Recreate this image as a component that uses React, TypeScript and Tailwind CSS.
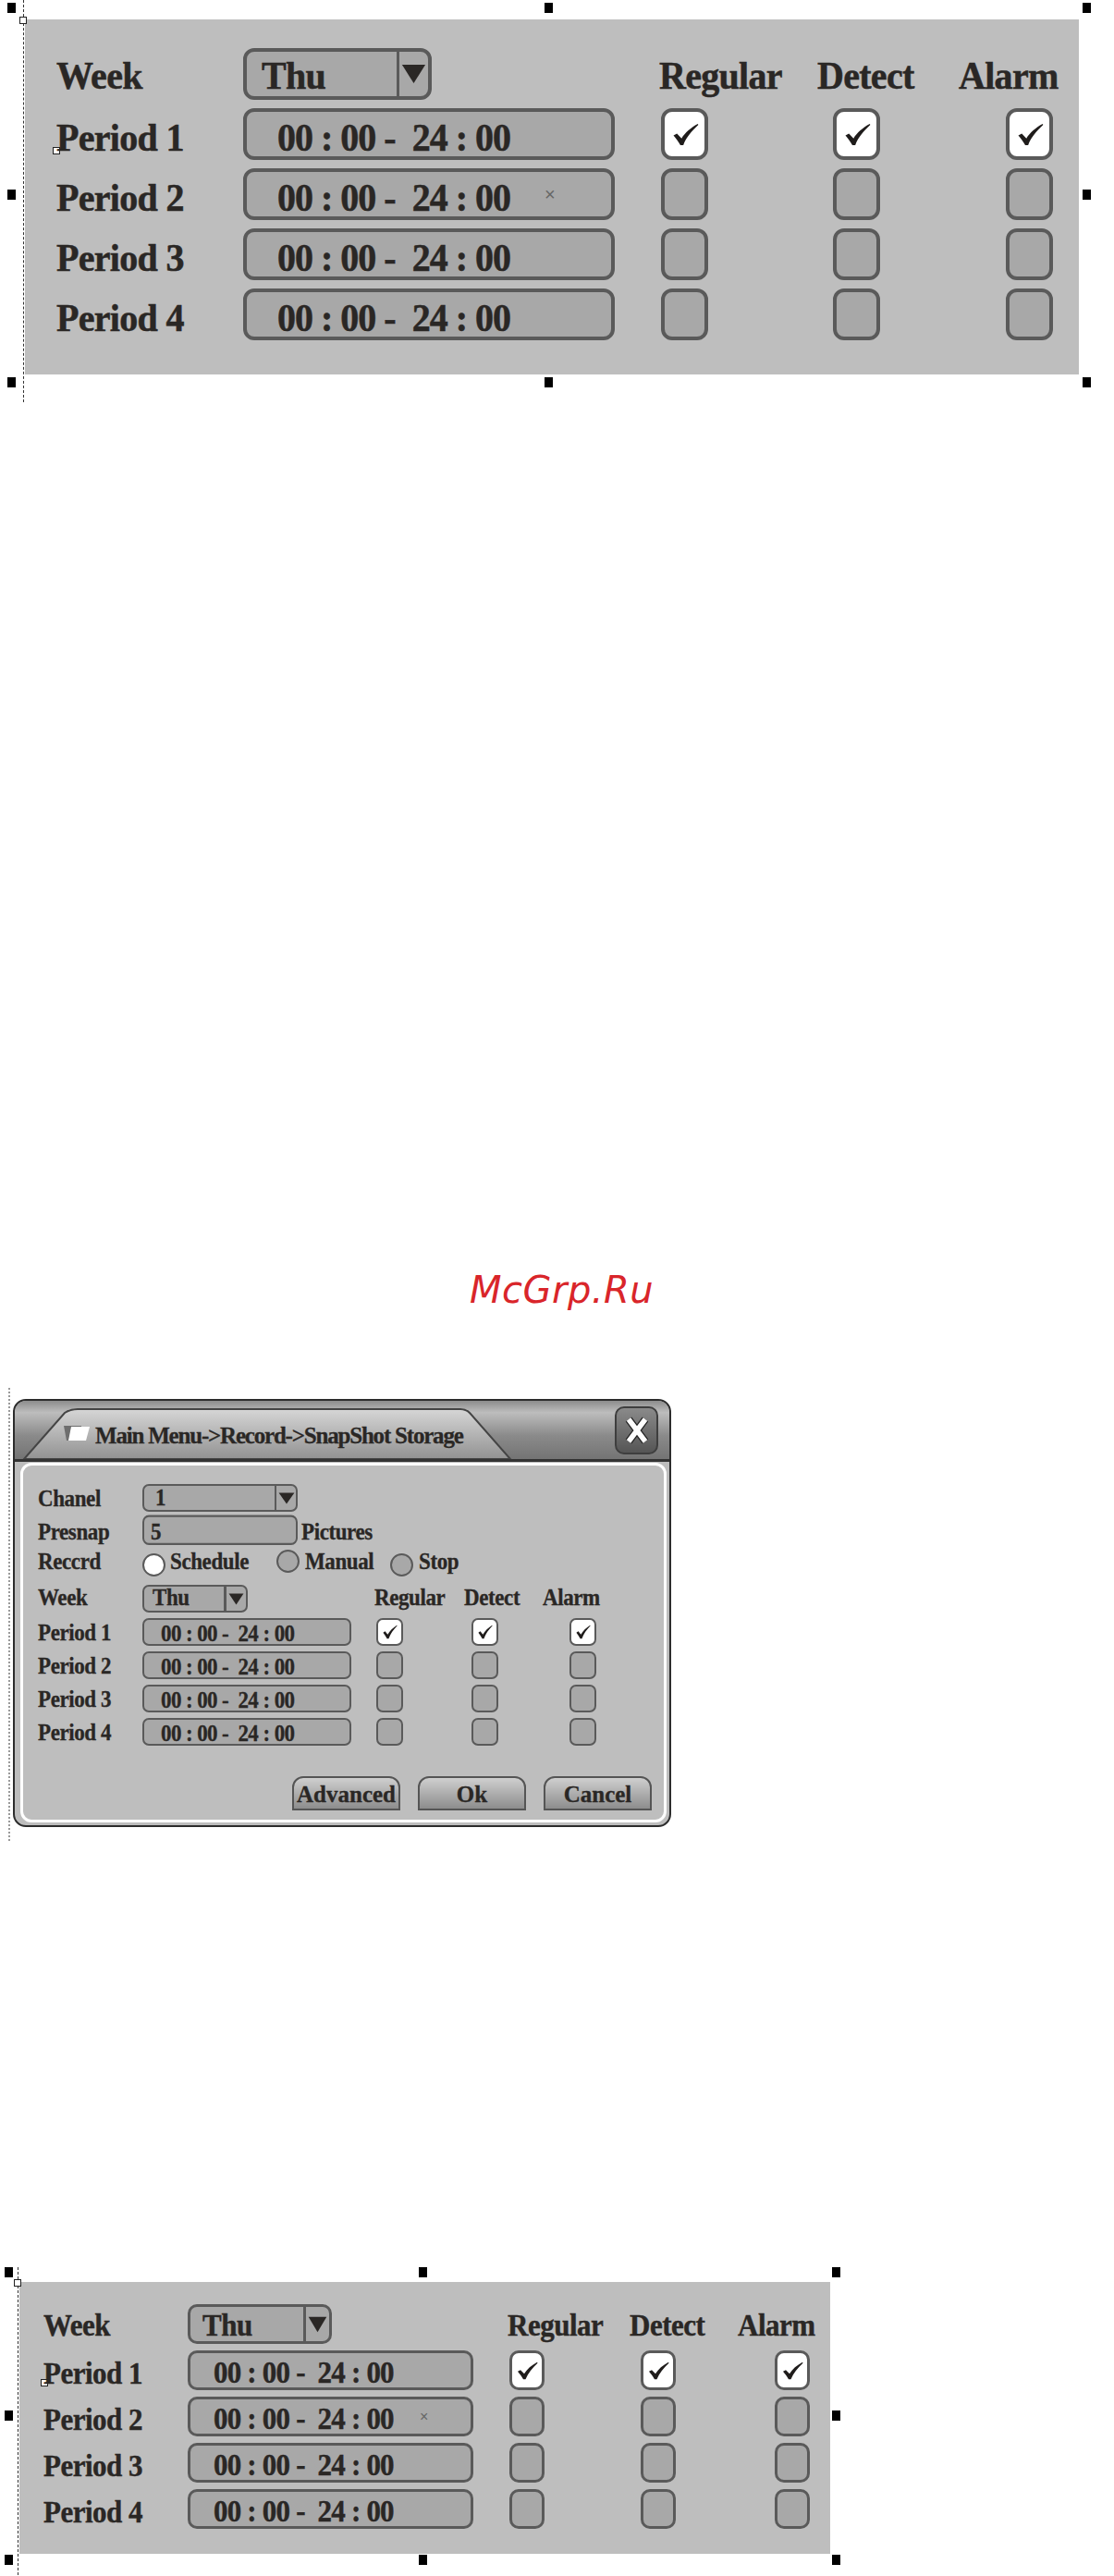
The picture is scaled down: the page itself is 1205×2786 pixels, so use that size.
const TIME = '00 : 00 -  24 : 00'

const SIZES = {
  lg: {
    text: 'text-[40px] tracking-[-0.7px] scale-y-108 origin-bottom [-webkit-text-stroke:0.5px]',
    time: 'text-[40px] tracking-[-1px] scale-y-108 origin-bottom [-webkit-text-stroke:0.5px]',
    row: 'h-[56px] mb-[9px]',
    label: 'w-[202px] pt-[12px]',
    headLabel: 'w-[202px] pt-[7px]',
    field: 'w-[402px] h-[56px] border-[4px] rounded-[12px]',
    timeText: 'pl-[33px] pt-[11px]',
    select: 'w-[204px] h-[56px] border-[4px] rounded-[12px]',
    selectText: 'w-[158px] pl-[16px] pt-[7px]',
    arrow: 'w-[27px] h-[22px]',
    check: 'w-[51px] h-[56px] border-[4px] rounded-[12px]',
    tick: 'w-[30px] h-[25px]',
    c1: 'ml-[50px]',
    c2: 'ml-[135px]',
    c3: 'ml-[136px]',
    head1: 'ml-[246px] w-[171px] pt-[7px]',
    head2: 'w-[153px] pt-[7px]',
    head3: 'pt-[7px]',
    x: 'left-[322px] text-[20px]',
  },
  sm: {
    text: 'text-[31px] tracking-[-0.5px] scale-y-108 origin-bottom [-webkit-text-stroke:0.4px]',
    time: 'text-[31px] tracking-[-0.8px] scale-y-108 origin-bottom [-webkit-text-stroke:0.4px]',
    row: 'h-[43px] mb-[7px]',
    label: 'w-[156px] pt-[11px]',
    headLabel: 'w-[156px] pt-[7px]',
    field: 'w-[309px] h-[43px] border-[3px] rounded-[10px]',
    timeText: 'pl-[25px] pt-[10px]',
    select: 'w-[156px] h-[43px] border-[3px] rounded-[10px]',
    selectText: 'w-[121px] pl-[13px] pt-[7px]',
    arrow: 'w-[21px] h-[18px]',
    check: 'w-[38px] h-[43px] border-[3px] rounded-[10px]',
    tick: 'w-[24px] h-[20px]',
    c1: 'ml-[39px]',
    c2: 'ml-[104px]',
    c3: 'ml-[107px]',
    head1: 'ml-[190px] w-[132px] pt-[7px]',
    head2: 'w-[117px] pt-[7px]',
    head3: 'pt-[7px]',
    x: 'left-[248px] text-[16px]',
  },
  xs: {
    text: 'text-[23px] tracking-[-0.4px] scale-y-108 origin-bottom [-webkit-text-stroke:0.3px]',
    time: 'text-[23px] tracking-[-0.6px] scale-y-108 origin-bottom [-webkit-text-stroke:0.3px]',
    row: 'h-[30px] mb-[6px]',
    label: 'w-[113px] pt-[7px]',
    headLabel: 'w-[113px] pt-[2px]',
    field: 'w-[226px] h-[30px] border-2 rounded-[7px]',
    timeText: 'pl-[18px] pt-[8px]',
    select: 'w-[114px] h-[30px] border-2 rounded-[7px]',
    selectText: 'w-[89px] pl-[9px] pt-[2px]',
    arrow: 'w-[17px] h-[13px]',
    check: 'w-[29px] h-[30px] border-2 rounded-[7px]',
    tick: 'w-[17px] h-[16px]',
    c1: 'ml-[27px]',
    c2: 'ml-[74px]',
    c3: 'ml-[77px]',
    head1: 'ml-[137px] w-[97px] pt-[2px]',
    head2: 'w-[85px] pt-[2px]',
    head3: 'pt-[2px]',
    x: '',
  },
}

type Size = keyof typeof SIZES

function Arrow({ className }: { className: string }) {
  return (
    <svg viewBox="0 0 30 22" preserveAspectRatio="none" className={className}>
      <path d="M1 1 H29 L15 21 Z" fill="#2a2725" />
    </svg>
  )
}

function Tick({ className }: { className: string }) {
  return (
    <svg viewBox="0 0 24 24" preserveAspectRatio="none" className={className}>
      <path d="M2 13 L5 11 L9 16 C12 10 17 5 23 1 L23.5 2 C18 8 13 15 10.5 23 L8 23 C6 19 4 16 2 13 Z" fill="#1f1c1b" />
    </svg>
  )
}

function Select({ value, size }: { value: string; size: Size }) {
  const s = SIZES[size]
  return (
    <div className={`flex items-center overflow-hidden border-[#5a5a5a] bg-[#a8a8a8] ${s.select}`}>
      <div className={`flex-1 font-bold ${s.text} ${s.selectText}`}>{value}</div>
      <div className="flex h-full items-center justify-center border-l-[3px] border-[#5a5a5a] px-[2px]">
        <Arrow className={s.arrow} />
      </div>
    </div>
  )
}

function CheckBox({ checked, size, className }: { checked?: boolean; size: Size; className: string }) {
  const s = SIZES[size]
  return (
    <div className={`flex shrink-0 items-center justify-center border-[#5a5a5a] ${checked ? 'bg-white' : 'bg-[#a8a8a8]'} ${s.check} ${className}`}>
      {checked && <Tick className={s.tick} />}
    </div>
  )
}

function ScheduleRows({ size }: { size: Size }) {
  const s = SIZES[size]
  return (
    <div className="flex flex-col">
      <div className={`flex items-center font-bold ${s.row}`}>
        <div className={`${s.text} ${s.headLabel}`}>Week</div>
        <Select value="Thu" size={size} />
        <div className={`${s.text} ${s.head1}`}>Regular</div>
        <div className={`${s.text} ${s.head2}`}>Detect</div>
        <div className={`${s.text} ${s.head3}`}>Alarm</div>
      </div>
      {[1, 2, 3, 4].map((n) => (
        <div key={n} className={`flex items-center ${s.row}`}>
          <div className={`font-bold ${s.text} ${s.label}`}>Period {n}</div>
          <div className={`relative flex shrink-0 items-center border-[#5a5a5a] bg-[#a8a8a8] ${s.field}`}>
            <span className={`inline-block whitespace-pre font-bold ${s.time} ${s.timeText}`}>{TIME}</span>
            {n === 2 && size !== 'xs' && (
              <span className={`absolute top-1/2 -translate-y-1/2 font-['Liberation_Sans',sans-serif] text-[#666666] ${s.x}`}>×</span>
            )}
          </div>
          <CheckBox checked={n === 1} size={size} className={s.c1} />
          <CheckBox checked={n === 1} size={size} className={s.c2} />
          <CheckBox checked={n === 1} size={size} className={s.c3} />
        </div>
      ))}
    </div>
  )
}

function Handle({ className }: { className: string }) {
  return <div className={`absolute h-[11px] w-[9px] bg-black ${className}`} />
}

function Marker({ className }: { className: string }) {
  return <div className={`absolute h-[8px] w-[8px] border border-[#222222] bg-white ${className}`} />
}

function Radio({ on, className }: { on?: boolean; className?: string }) {
  return <div className={`h-[25px] w-[25px] shrink-0 rounded-full border-2 border-[#5a5a5a] ${on ? 'bg-white' : 'bg-[#a8a8a8]'} ${className ?? ''}`} />
}

function SnapshotDialog() {
  const s = SIZES.xs
  return (
    <div className="relative ml-[14px] h-[463px] w-[712px] rounded-[14px] border-2 border-[#2c2c2c] bg-[#bdbdbd]">
      <div className="absolute left-[-7px] top-[-14px] h-[490px] border-l-2 border-dotted border-[#9a9a9a]" />

      <div className="relative flex h-[66px] items-center overflow-hidden rounded-t-[12px] border-b-[3px] border-[#333333] bg-[linear-gradient(#8c8c8c,#bdbdbd_20%,#8a8a8a_60%,#747474)] pl-[52px]">
        <svg viewBox="0 0 530 64" preserveAspectRatio="none" className="absolute bottom-0 left-[8px] h-[64px] w-[530px]">
          <defs>
            <linearGradient id="tabFill" x1="0" y1="0" x2="0" y2="1">
              <stop offset="0" stopColor="#d6d6d6" />
              <stop offset="1" stopColor="#929292" />
            </linearGradient>
          </defs>
          <path d="M2 64 L46 14 Q52 10 60 10 H474 Q480 10 484 14 L528 64 Z" fill="url(#tabFill)" stroke="#444444" strokeWidth="2" />
        </svg>
        <svg viewBox="0 0 30 18" className="relative mt-[6px] h-[18px] w-[30px] shrink-0">
          <path d="M1 1 H20 L20 17 H4 Z" fill="#6e6e6e" />
          <path d="M9 2 H29 L25 17 H6 Z" fill="#ffffff" />
        </svg>
        <span className="relative ml-[5px] mt-[13px] whitespace-nowrap text-[25px] font-bold tracking-[-1.2px] [-webkit-text-stroke:0.3px]">Main Menu-&gt;Record-&gt;SnapShot Storage</span>
        <div className="absolute right-[12px] top-[6px] flex h-[52px] w-[47px] items-center justify-center rounded-[10px] border-2 border-[#3e3e3e] bg-[linear-gradient(#8a8a8a,#555555)]">
          <svg viewBox="0 0 30 34" className="h-[34px] w-[30px]">
            <path d="M6 5 L24 29 M24 5 L6 29" fill="none" stroke="#222222" strokeWidth="8" />
            <path d="M6 5 L24 29 M24 5 L6 29" fill="none" stroke="#ffffff" strokeWidth="5.5" />
          </svg>
        </div>
      </div>

      <div className="ml-[6px] mr-[3px] mt-[1px] h-[389px] rounded-[12px] border-[3px] border-white bg-[#bebebe] pl-[16px] pr-[13px] pt-[20px]">
        <div className="mb-[6px] flex h-[30px] items-center font-bold">
          <div className={`${s.text} ${s.label}`}>Chanel</div>
          <div className="flex h-[30px] w-[168px] items-center overflow-hidden rounded-[7px] border-2 border-[#5a5a5a] bg-[#a8a8a8]">
            <div className={`w-[141px] pl-[12px] pt-[5px] ${s.text}`}>1</div>
            <div className="flex h-full flex-1 items-center justify-center border-l-2 border-[#5a5a5a]">
              <Arrow className="h-[13px] w-[18px]" />
            </div>
          </div>
        </div>
        <div className="mb-[4px] flex h-[30px] items-center font-bold">
          <div className={`${s.text} ${s.label}`}>Presnap</div>
          <div className={`h-[30px] w-[168px] rounded-[7px] border-2 border-[#5a5a5a] bg-[#a8a8a8] pl-[7px] pt-[3px] !leading-[24px] ${s.text}`}>5</div>
          <div className={`ml-[4px] pt-[7px] ${s.text}`}>Pictures</div>
        </div>
        <div className="mb-[10px] flex h-[29px] items-center font-bold">
          <div className={`${s.text} w-[113px] pt-[4px]`}>Reccrd</div>
          <Radio on className="mt-[6px]" />
          <div className={`ml-[5px] w-[115px] pt-[4px] ${s.text}`}>Schedule</div>
          <Radio className="mb-[2px]" />
          <div className={`ml-[6px] w-[92px] pt-[4px] ${s.text}`}>Manual</div>
          <Radio className="mt-[6px]" />
          <div className={`ml-[6px] pt-[4px] ${s.text}`}>Stop</div>
        </div>

        <ScheduleRows size="xs" />

        <div className="mt-[27px] flex justify-end gap-[19px] text-[25px] font-bold">
          {['Advanced', 'Ok', 'Cancel'].map((b) => (
            <button
              key={b}
              className="h-[37px] w-[117px] rounded-t-[12px] border-2 border-[#555555] bg-[linear-gradient(#cfcfcf,#8d8d8d)] pt-[2px] leading-[30px] text-[#2a2725] [-webkit-text-stroke:0.3px]"
            >
              {b}
            </button>
          ))}
        </div>
      </div>
    </div>
  )
}

export default function App() {
  return (
    <div className="relative flex h-[2786px] w-[1205px] flex-col overflow-hidden bg-white font-['Liberation_Serif',serif] text-[#2a2725]">
      <div className="relative ml-[27px] mt-[21px] h-[384px] w-[1140px] shrink-0 bg-[#bebebe] pl-[34px] pt-[31px]">
        <div className="absolute left-[-2px] top-[-21px] h-[435px] border-l border-dashed border-[#333333]" />
        <Handle className="left-[-19px] top-[-18px]" />
        <Handle className="left-[562px] top-[-18px]" />
        <Handle className="left-[1144px] top-[-18px]" />
        <Handle className="left-[-19px] top-[184px]" />
        <Handle className="left-[1144px] top-[184px]" />
        <Handle className="left-[-19px] top-[387px]" />
        <Handle className="left-[562px] top-[387px]" />
        <Handle className="left-[1144px] top-[387px]" />
        <Marker className="left-[-6px] top-[-3px]" />
        <Marker className="left-[30px] top-[138px]" />
        <ScheduleRows size="lg" />
      </div>

      <div className="ml-[508px] mt-[966px] shrink-0 font-['DejaVu_Sans',sans-serif] text-[40px] italic leading-[48px] tracking-[0.5px] text-[#d9252a]">McGrp.Ru</div>

      <div className="mt-[94px] shrink-0">
        <SnapshotDialog />
      </div>

      <div className="relative ml-[21px] mt-[492px] h-[294px] w-[877px] shrink-0 bg-[#bebebe] pl-[26px] pt-[24px]">
        <div className="absolute left-[-2px] top-[-16px] h-[333px] border-l border-dashed border-[#333333]" />
        <Handle className="left-[-16px] top-[-16px]" />
        <Handle className="left-[432px] top-[-16px]" />
        <Handle className="left-[879px] top-[-16px]" />
        <Handle className="left-[-16px] top-[139px]" />
        <Handle className="left-[879px] top-[139px]" />
        <Handle className="left-[-16px] top-[295px]" />
        <Handle className="left-[432px] top-[295px]" />
        <Handle className="left-[879px] top-[295px]" />
        <Marker className="left-[-6px] top-[-3px]" />
        <Marker className="left-[23px] top-[105px]" />
        <ScheduleRows size="sm" />
      </div>
    </div>
  )
}
